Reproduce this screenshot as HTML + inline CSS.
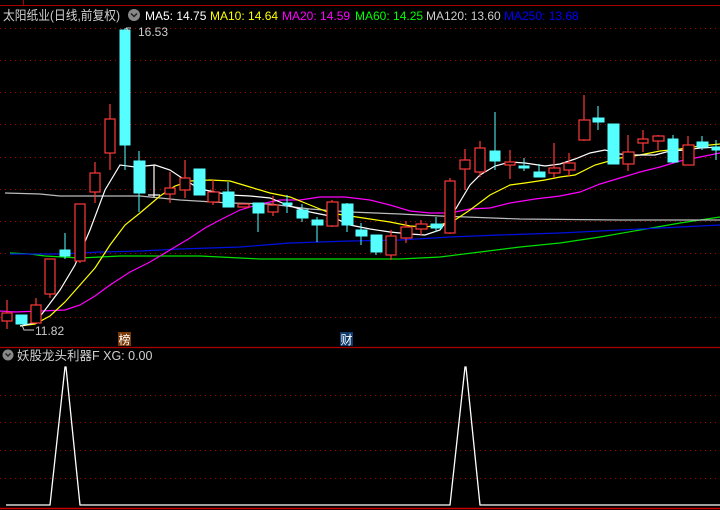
<!DOCTYPE html>
<html><head><meta charset="utf-8"><style>
html,body{margin:0;padding:0;background:#000;width:720px;height:510px;overflow:hidden}
svg{display:block}
text{font-family:"Liberation Sans","Noto Sans CJK SC",sans-serif}
</style></head><body>
<svg width="720" height="510" viewBox="0 0 720 510" xmlns="http://www.w3.org/2000/svg">
<rect width="720" height="510" fill="#000"/>
<line x1="0" y1="5.5" x2="720" y2="5.5" stroke="#a00" stroke-width="1"/>
<line x1="23.5" y1="0" x2="23.5" y2="5" stroke="#a00"/>
<g stroke="#a00" stroke-width="1" stroke-dasharray="1,4">
<line x1="0" y1="28.5" x2="720" y2="28.5"/>
<line x1="0" y1="60.5" x2="720" y2="60.5"/>
<line x1="0" y1="92.5" x2="720" y2="92.5"/>
<line x1="0" y1="124.5" x2="720" y2="124.5"/>
<line x1="0" y1="157.5" x2="720" y2="157.5"/>
<line x1="0" y1="189.5" x2="720" y2="189.5"/>
<line x1="0" y1="221.5" x2="720" y2="221.5"/>
<line x1="0" y1="253.5" x2="720" y2="253.5"/>
<line x1="0" y1="285.5" x2="720" y2="285.5"/>
<line x1="0" y1="317.5" x2="720" y2="317.5"/>
<line x1="0" y1="395.5" x2="720" y2="395.5"/>
<line x1="0" y1="422.5" x2="720" y2="422.5"/>
<line x1="0" y1="450.5" x2="720" y2="450.5"/>
<line x1="0" y1="478.5" x2="720" y2="478.5"/>
</g>
<text x="3" y="20" font-size="13" fill="#d0d0d0" textLength="117" lengthAdjust="spacingAndGlyphs">太阳纸业(日线,前复权)</text>
<circle cx="134" cy="15" r="6" fill="#888"/>
<path d="M131 13.5 L134 16.5 L137 13.5" stroke="#222" stroke-width="1.5" fill="none"/>
<text x="145" y="20" font-size="12" fill="#fff">MA5: 14.75</text>
<text x="210" y="20" font-size="12" fill="#ff0">MA10: 14.64</text>
<text x="282" y="20" font-size="12" fill="#f0f">MA20: 14.59</text>
<text x="355" y="20" font-size="12" fill="#0f0">MA60: 14.25</text>
<text x="426" y="20" font-size="12" fill="#ccc">MA120: 13.60</text>
<text x="504" y="20" font-size="12" fill="#00f">MA250: 13.68</text>

<g fill="none" stroke-width="1.2">
<polyline stroke="#00e000" points="10,253 30,254 45,256 80,258 100,257 120,256 150,256 200,256 260,259 320,259 400,259 440,257 480,252 520,247 560,243 600,237 640,230 680,223 720,217"/>
<polyline stroke="#0010e0" points="10,254 60,254 100,252 140,251 180,249 240,247 290,243 350,241 400,240 450,237 500,235 560,233 620,230 680,227 720,225"/>
<polyline stroke="#bbb" points="5,193 40,194 60,196 100,196 140,196 180,200 230,203 270,204 310,209 350,212 400,214 440,216 520,219 620,220 720,220"/>
<polyline stroke="#f0f" points="0,311 15,312 40,311 65,310 80,305 95,296 110,285 130,272 150,262 170,250 190,238 205,228 220,220 240,210 260,204 280,200 300,200 320,197 345,197 370,200 390,205 410,211 430,213 450,213 470,209 490,208 510,203 535,199 560,196 580,192 600,184 620,178 640,172 660,167 680,161 700,157 720,153"/>
<polyline stroke="#ff0" points="20,326 35,324 50,316 65,302 80,285 95,268 110,245 125,225 140,213 160,196 175,186 190,181 210,180 230,181 250,187 270,193 290,197 310,205 330,213 350,216 370,219 390,222 410,226 425,227 440,225 455,220 470,210 490,195 510,185 525,183 545,180 560,177 575,175 595,165 620,158 640,155 660,151 680,149 700,146 720,144"/>
<polyline stroke="#fff" points="20,326 35,323 45,310 60,290 75,265 90,230 105,190 120,165 135,167 145,166 155,165 170,170 185,180 200,189 215,192 230,195 250,196 270,198 290,206 310,212 330,216 350,225 370,229 390,232 410,234 425,235 440,230 455,210 470,185 480,175 495,166 510,162 525,163 545,166 560,164 575,159 590,153 605,150 620,154 635,155 655,155 670,151 685,150 700,148 720,147"/>
</g>

<g stroke="#ff3838" stroke-width="1.2" fill="#000">
<line x1="7" y1="300" x2="7" y2="329"/><rect x="2" y="313" width="10" height="8"/>
<line x1="36" y1="298" x2="36" y2="323"/><rect x="31" y="305" width="10" height="18"/>
<line x1="50" y1="259" x2="50" y2="298"/><rect x="45" y="259" width="10" height="35"/>
<line x1="80" y1="204" x2="80" y2="263"/><rect x="75" y="204" width="10" height="57"/>
<line x1="95" y1="162" x2="95" y2="203"/><rect x="90" y="173" width="10" height="19"/>
<line x1="110" y1="104" x2="110" y2="170"/><rect x="105" y="119" width="10" height="34"/>
<line x1="170" y1="172" x2="170" y2="203"/><rect x="165" y="188" width="10" height="6"/>
<line x1="185" y1="160" x2="185" y2="198"/><rect x="180" y="178" width="10" height="12"/>
<line x1="213" y1="180" x2="213" y2="205"/><rect x="208" y="192" width="11" height="10"/>
<rect x="238" y="204" width="11" height="3"/>
<line x1="273" y1="196" x2="273" y2="216"/><rect x="268" y="205" width="10" height="7"/>
<line x1="332" y1="200" x2="332" y2="227"/><rect x="327" y="202" width="11" height="24"/>
<line x1="391" y1="230" x2="391" y2="260"/><rect x="386" y="236" width="10" height="19"/>
<line x1="406" y1="221" x2="406" y2="243"/><rect x="401" y="227" width="11" height="11"/>
<line x1="421" y1="220" x2="421" y2="235"/><rect x="416" y="224" width="11" height="5"/>
<line x1="450" y1="178" x2="450" y2="234"/><rect x="445" y="181" width="10" height="52"/>
<line x1="465" y1="149" x2="465" y2="190"/><rect x="460" y="160" width="10" height="9"/>
<line x1="480" y1="141" x2="480" y2="177"/><rect x="475" y="148" width="10" height="24"/>
<line x1="510" y1="150" x2="510" y2="179"/><rect x="505" y="162" width="10" height="3"/>
<line x1="554" y1="143" x2="554" y2="178"/><rect x="549" y="168" width="11" height="5"/>
<line x1="569" y1="153" x2="569" y2="176"/><rect x="564" y="163" width="11" height="7"/>
<line x1="584" y1="95" x2="584" y2="141"/><rect x="579" y="120" width="11" height="20"/>
<line x1="628" y1="135" x2="628" y2="171"/><rect x="623" y="152" width="11" height="12"/>
<line x1="643" y1="130" x2="643" y2="152"/><rect x="638" y="139" width="10" height="4"/>
<line x1="658" y1="135" x2="658" y2="150"/><rect x="653" y="136" width="11" height="5"/>
<line x1="688" y1="136" x2="688" y2="165"/><rect x="683" y="145" width="11" height="20"/>
</g>
<g fill="#55ffff" stroke="#55ffff" stroke-width="1">
<rect x="16" y="315" width="11" height="9"/>
<line x1="65" y1="233" x2="65" y2="259"/><rect x="60" y="250" width="10" height="6"/>
<line x1="125" y1="28" x2="125" y2="170"/><rect x="120" y="30" width="10" height="115"/>
<line x1="139" y1="151" x2="139" y2="212"/><rect x="134" y="161" width="11" height="32"/>
<line x1="199" y1="169" x2="199" y2="195"/><rect x="194" y="169" width="11" height="26"/>
<line x1="228" y1="182" x2="228" y2="207"/><rect x="223" y="192" width="11" height="15"/>
<line x1="258" y1="203" x2="258" y2="232"/><rect x="253" y="203" width="11" height="10"/>
<line x1="287" y1="195" x2="287" y2="213"/><rect x="283" y="203" width="9" height="2"/>
<line x1="302" y1="204" x2="302" y2="222"/><rect x="297" y="210" width="11" height="8"/>
<line x1="317" y1="217" x2="317" y2="242"/><rect x="312" y="220" width="11" height="5"/>
<line x1="347" y1="203" x2="347" y2="232"/><rect x="342" y="204" width="11" height="21"/>
<line x1="361" y1="223" x2="361" y2="245"/><rect x="356" y="230" width="11" height="6"/>
<line x1="376" y1="235" x2="376" y2="255"/><rect x="371" y="235" width="11" height="17"/>
<line x1="436" y1="217" x2="436" y2="232"/><rect x="431" y="224" width="11" height="4"/>
<line x1="495" y1="112" x2="495" y2="170"/><rect x="490" y="151" width="10" height="10"/>
<line x1="524" y1="158" x2="524" y2="171"/><rect x="519" y="166" width="10" height="2"/>
<line x1="539" y1="164" x2="539" y2="177"/><rect x="534" y="172" width="11" height="5"/>
<line x1="598" y1="106" x2="598" y2="130"/><rect x="593" y="118" width="11" height="4"/>
<rect x="608" y="124" width="11" height="40"/>
<line x1="673" y1="135" x2="673" y2="163"/><rect x="668" y="139" width="10" height="23"/>
<line x1="702" y1="136" x2="702" y2="150"/><rect x="697" y="142" width="11" height="5"/>
<line x1="716" y1="140" x2="716" y2="160"/><rect x="712" y="147" width="8" height="3"/>
</g>
<g stroke="#fff" stroke-width="1.2"><line x1="154" y1="165" x2="154" y2="197"/><line x1="148" y1="195" x2="160" y2="195"/></g>

<path d="M126 28 L131 28 M126 28 L129 31" stroke="#ccc" fill="none"/>
<text x="138" y="36" font-size="12" fill="#ccc">16.53</text>
<path d="M22 325 L24 330 L34 330" stroke="#ccc" fill="none"/>
<text x="35" y="335" font-size="12" fill="#ccc">11.82</text>
<rect x="118" y="332" width="13" height="14" fill="#7a3a08"/>
<text x="118.5" y="344" font-size="12" fill="#fff">榜</text>
<rect x="340" y="332" width="13" height="14" fill="#0e3a6e"/>
<text x="340.5" y="344" font-size="12" fill="#fff">财</text>

<line x1="0" y1="347.5" x2="720" y2="347.5" stroke="#a00" stroke-width="1.2"/>
<circle cx="8" cy="355" r="5.5" fill="#888"/>
<path d="M5.5 353.5 L8 356 L10.5 353.5" stroke="#222" stroke-width="1.4" fill="none"/>
<text x="17" y="360" font-size="12.5" fill="#d0d0d0">妖股龙头利器F  XG: 0.00</text>

<polyline fill="none" stroke="#fff" stroke-width="1.3" points="6,505 50,505 65,367 66,367 80,505 450,505 465,367 466,367 480,505 720,505"/>
<line x1="0" y1="508.5" x2="720" y2="508.5" stroke="#c00" stroke-width="1.5"/>
</svg>
</body></html>
